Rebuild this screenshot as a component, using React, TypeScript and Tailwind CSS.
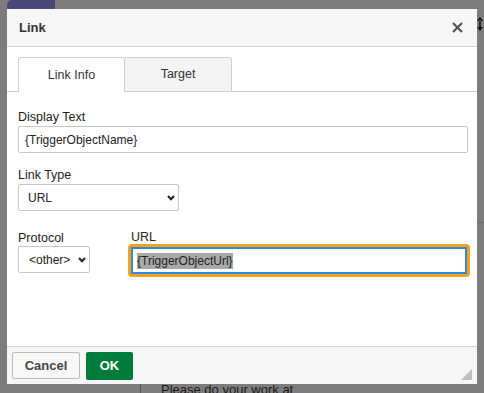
import React from 'react';

const Chevron = () => (
  <svg width="8" height="6" viewBox="0 0 8 6" className="shrink-0">
    <path d="M1 1 L4 4.2 L7 1" fill="none" stroke="#222" strokeWidth="2" />
  </svg>
);

const LinkDialog = () => {
  return (
    <div className="absolute left-[7px] top-[9px] w-[470px] h-[375px] flex flex-col bg-white text-[12.5px] text-[#222]">
      <div className="h-[38px] shrink-0 flex items-center justify-between pl-[12px] pr-[14px] bg-[#f6f6f6] border-b border-[#d1d1d1]">
        <span className="font-bold text-[13px] text-[#333]">Link</span>
        <svg width="11" height="11" viewBox="0 0 11 11">
          <path d="M1 1 L10 10 M10 1 L1 10" stroke="#555" strokeWidth="2.2" />
        </svg>
      </div>

      <div className="flex-1 flex flex-col pt-[10px]">
        <div className="flex pl-[11px] border-b border-[#cfcfcf] h-[35px]">
          <div className="w-[107px] -mb-px flex items-center justify-center bg-white border border-b-0 border-[#cfcfcf] rounded-t-[3px] text-[#333]">
            Link Info
          </div>
          <div className="w-[107px] flex items-center justify-center bg-[#f4f4f4] border border-l-0 border-b-0 border-[#cfcfcf] rounded-tr-[3px] text-[#333]">
            Target
          </div>
        </div>

        <div className="flex flex-col px-[11px] pt-[18px]">
          <label className="leading-[15px]">Display Text</label>
          <div className="mt-[1px] w-[450px] h-[27px] flex items-center px-[6px] border border-[#c6c6c6] rounded-[2px] text-[12px]">
            {'{TriggerObjectName}'}
          </div>

          <label className="mt-[15px] leading-[15px]">Link Type</label>
          <div className="mt-[1px] w-[161px] h-[27px] flex items-center justify-between pl-[9px] pr-[3px] border border-[#c6c6c6] rounded-[2px] text-[12px]">
            <span>URL</span>
            <Chevron />
          </div>

          <div className="mt-[20px] flex items-start">
            <div className="flex flex-col w-[110px] shrink-0">
              <label className="leading-[15px]">Protocol</label>
              <div className="w-[72px] h-[27px] flex items-center justify-between pl-[10px] pr-[3px] border border-[#c6c6c6] rounded-[2px] text-[12px]">
                <span>&lt;other&gt;</span>
                <Chevron />
              </div>
            </div>
            <div className="flex flex-col shrink-0 -mt-px">
              <label className="ml-[3px] leading-[15px]">URL</label>
              <div className="-mt-[1px] w-[342px] h-[33px] rounded-[4px] border-[3px] border-[#f7a21b]">
                <div className="h-full flex items-center px-[4px] border-2 border-[#2a8ce9] text-[12px]">
                  <span className="bg-[#a9a9a9] leading-[16px]">{'{TriggerObjectUrl}'}</span>
                </div>
              </div>
            </div>
          </div>
        </div>
      </div>

      <div className="relative h-[38px] shrink-0 flex items-center gap-[6px] px-[5px] bg-[#f6f6f6] border-t border-[#cfcfcf] text-[13px]">
        <button className="w-[68px] h-[27px] bg-[#f8f8f8] border border-[#bdbdbd] rounded-[2px] font-bold text-[#444]">
          Cancel
        </button>
        <button className="w-[47px] h-[28px] bg-[#007c3a] rounded-[2px] font-bold text-white">
          OK
        </button>
        <svg width="11" height="11" viewBox="0 0 11 11" className="absolute right-[5px] bottom-[4px]">
          <path d="M11 0 L11 11 L0 11 Z" fill="#bdbdbd" />
        </svg>
      </div>
    </div>
  );
};

const App = () => {
  return (
    <div className="relative w-[484px] h-[393px] overflow-hidden bg-[#7d7d7d] font-['Liberation_Sans',Arial,sans-serif]">
      <div className="ml-[7px] w-[48px] h-[9px] bg-[#4a4879] rounded-tl-[5px]" />
      <div className="absolute right-0 top-0 w-[7px] h-[393px] flex flex-col">
        <svg width="10" height="16" viewBox="0 0 10 16" className="mt-[16px]">
          <path d="M3 1 L0 5 H6 Z M3 15 L0 11 H6 Z M2.2 4 H3.8 V12 H2.2 Z" fill="#111" />
        </svg>
        <div className="mt-[190px] h-px bg-[#6a6a6a]" />
      </div>
      <div className="absolute left-[140px] top-[384px] w-px h-[9px] bg-[#555]" />
      <div className="absolute left-[161px] top-[382px] text-[13px] leading-[15px] text-[#1a1a1a]">Please do your work at</div>
      <LinkDialog />
    </div>
  );
};

export default App;
